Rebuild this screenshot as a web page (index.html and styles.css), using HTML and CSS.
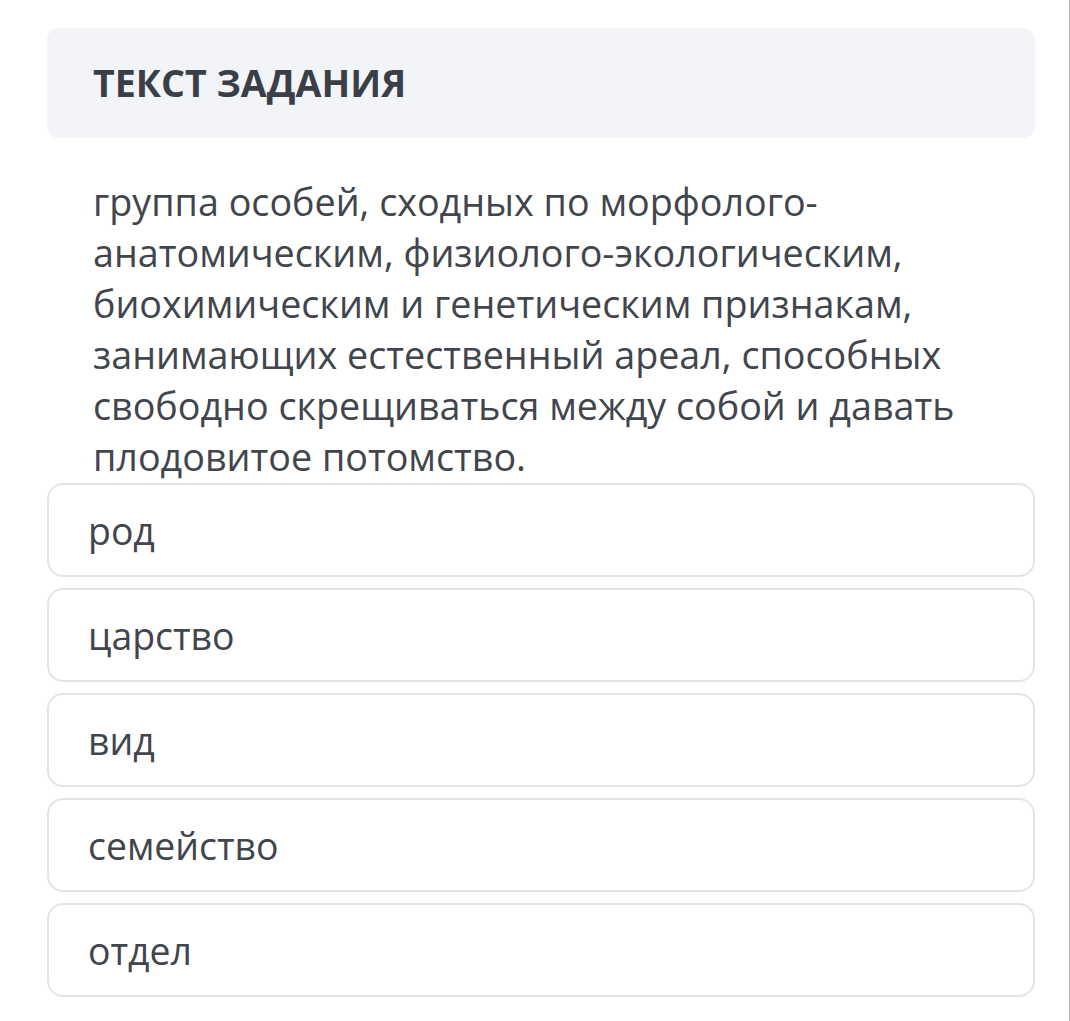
FILE: index.html
```html
<!DOCTYPE html>
<html lang="ru">
<head>
<meta charset="utf-8">
<link rel="stylesheet" href="styles.css">
</head>
<body>
<div class="page">
  <div class="task-header">
    <h1 class="task-title">ТЕКСТ ЗАДАНИЯ</h1>
  </div>
  <p class="task-text">группа особей, сходных по морфолого-анатомическим, физиолого-экологическим, биохимическим и генетическим признакам, занимающих естественный ареал, способных свободно скрещиваться между собой и давать плодовитое потомство.</p>
  <div class="options">
    <div class="option">род</div>
    <div class="option">царство</div>
    <div class="option">вид</div>
    <div class="option">семейство</div>
    <div class="option">отдел</div>
  </div>
</div>
</body>
</html>
```

FILE: styles.css
```css
html, body {
  margin: 0;
  padding: 0;
  background: #ffffff;
}
.page {
  box-sizing: border-box;
  width: 1070px;
  min-height: 1021px;
  padding: 28px 35px 0 47px;
  border-right: 1px solid #b5b5b5;
  font-family: "Open Sans", "Noto Sans", sans-serif;
  color: #41454c;
}
.task-header {
  width: 988px;
  height: 110px;
  box-sizing: border-box;
  background: #f3f4f7;
  border-radius: 12px;
  padding: 0 46px;
  display: flex;
  align-items: center;
}
.task-title {
  margin: 0;
  font-size: 37.6px;
  font-weight: 700;
  color: #3a3f47;
  line-height: 1;
}
.task-text {
  margin: 38px 0 0 0;
  padding: 0 40px 0 46px;
  width: 988px;
  box-sizing: border-box;
  font-size: 37.7px;
  line-height: 51px;
}
.options {
  display: flex;
  flex-direction: column;
  gap: 11px;
  width: 988px;
  margin-top: 1px;
}
.option {
  box-sizing: border-box;
  height: 94px;
  border: 2px solid #e3e4e6;
  border-radius: 16px;
  padding: 0 39px;
  display: flex;
  align-items: center;
  font-size: 37.4px;
  color: #41454c;
}
```
